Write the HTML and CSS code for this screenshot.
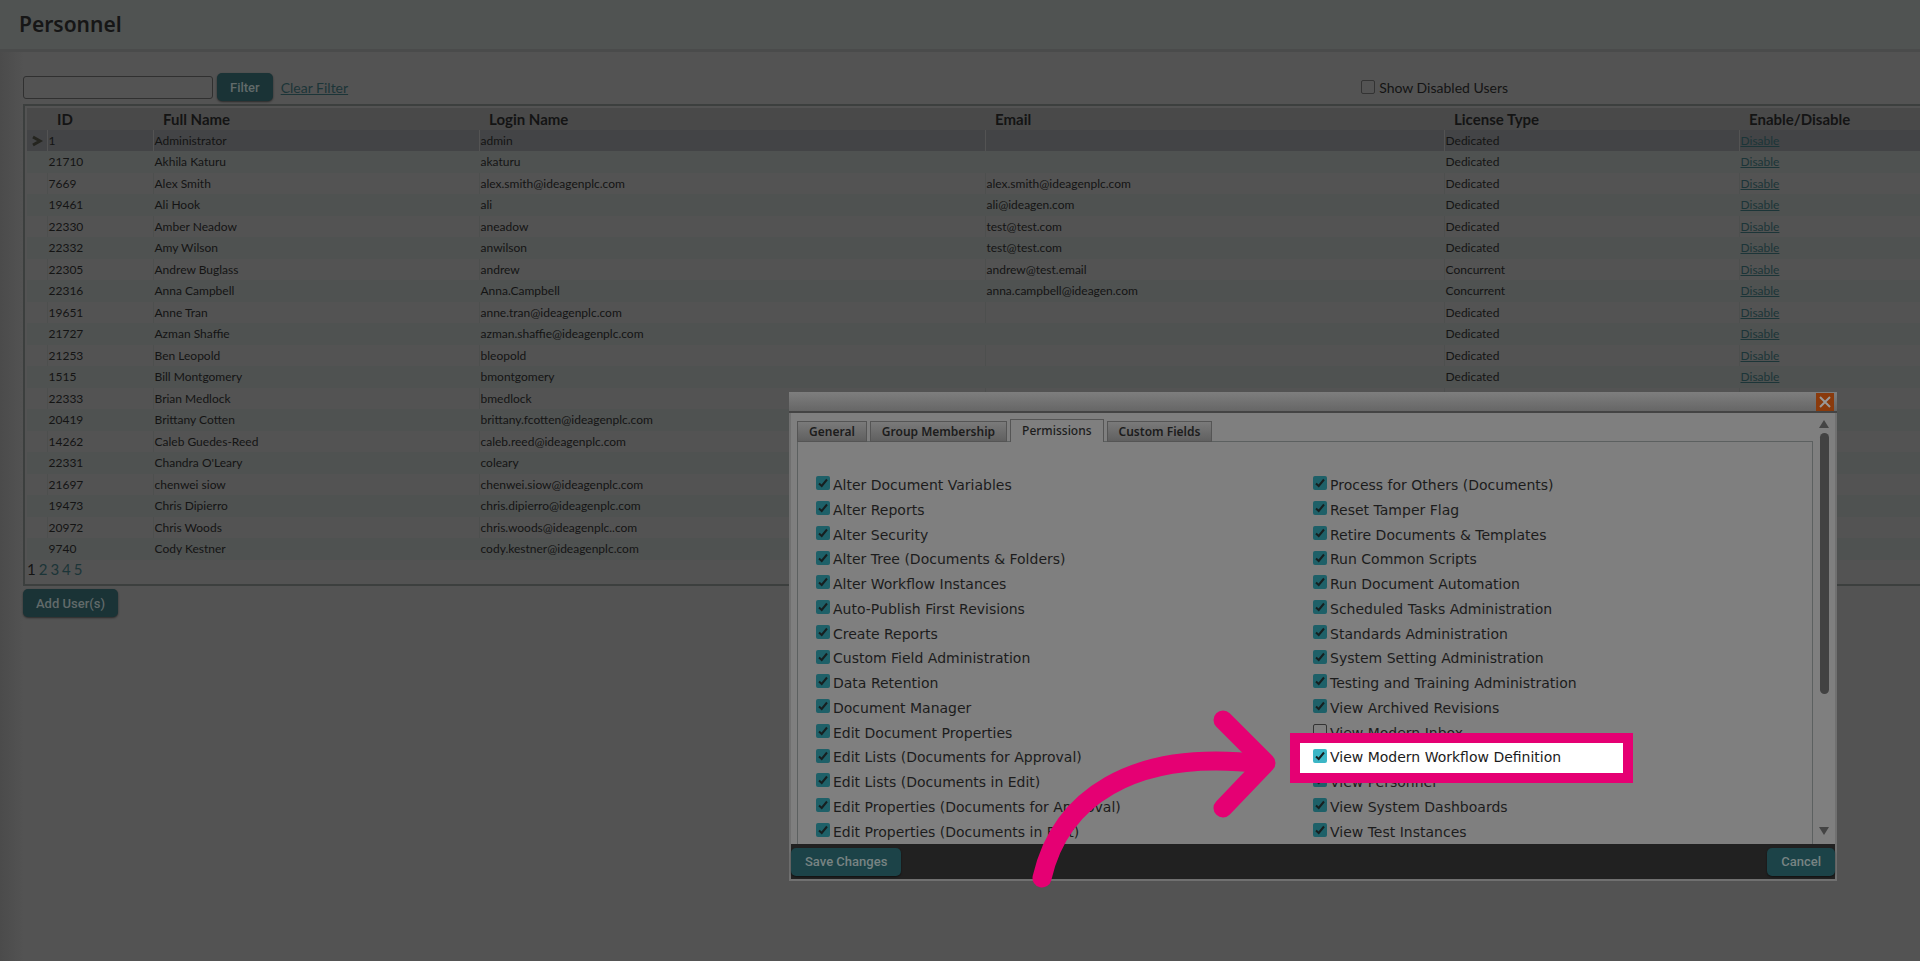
FILE: index.html
```
<!DOCTYPE html>
<html lang="en">

<head>
    <meta charset="UTF-8">
    <meta name="viewport" content="width=device-width, initial-scale=1.0">
    <title>Personnel</title>
    <link rel="stylesheet" href="styles.css">
</head>

<body>

    <header class="page-header">
        <h1>Personnel</h1>
    </header>

    <main class="page">
        <form class="toolbar">
            <input type="text" class="filter-input" aria-label="Filter users">
            <button type="button" class="btn">Filter</button>
            <a href="#" class="clear-link">Clear Filter</a>
            <label class="show-disabled"><input type="checkbox" class="check"> Show Disabled Users</label>
        </form>

        <div class="grid-box">
            <table class="users">
                <colgroup>
                    <col class="col-mark"><col class="col-id"><col class="col-name"><col class="col-login">
                    <col class="col-email"><col class="col-license"><col class="col-action">
                </colgroup>
                <thead>
                    <tr>
                        <th></th>
                        <th>ID</th>
                        <th>Full Name</th>
                        <th>Login Name</th>
                        <th>Email</th>
                        <th>License Type</th>
                        <th>Enable/Disable</th>
                    </tr>
                </thead>
                <tbody id="userRows"></tbody>
            </table>
            <nav class="pager">
                <span>1</span>
                <a href="#">2</a>
                <a href="#">3</a>
                <a href="#">4</a>
                <a href="#">5</a>
            </nav>
        </div>

        <button type="button" class="btn">Add User(s)</button>
    </main>

    <div class="modal" role="dialog" aria-label="User permissions">
        <div class="modal-title">
            <button type="button" class="close" aria-label="Close">
                <svg viewBox="0 0 18 18" width="18" height="18"><path d="M4 4L14 14M14 4L4 14" /></svg>
            </button>
        </div>

        <div class="modal-body">
            <div class="modal-main">
                <div class="tabs">
                    <button type="button" class="tab">General</button>
                    <button type="button" class="tab">Group Membership</button>
                    <button type="button" class="tab active">Permissions</button>
                    <button type="button" class="tab">Custom Fields</button>
                </div>
                <div class="panel">
                    <div class="perm-list" id="permsLeft"></div>
                    <div class="perm-list" id="permsRight"></div>
                </div>
            </div>
            <div class="scrollbar">
                <svg viewBox="0 0 10 8" width="10" height="8"><path d="M5 0L10 8H0Z" /></svg>
                <div class="track"><div class="thumb"></div></div>
                <svg viewBox="0 0 10 8" width="10" height="8"><path d="M0 0H10L5 8Z" /></svg>
            </div>
        </div>

        <div class="modal-footer">
            <button type="button" class="btn">Save Changes</button>
            <button type="button" class="btn">Cancel</button>
        </div>

        <svg class="arrow" viewBox="1030 708 250 182" width="250" height="182">
            <path d="M1042 878C1060 800 1130 748 1262 764" />
            <path d="M1223 720L1266 763L1223 808" />
        </svg>
    </div>

    <script>
        const users = [
            ['1', 'Administrator', 'admin', '', 'Dedicated'],
            ['21710', 'Akhila Katuru', 'akaturu', '', 'Dedicated'],
            ['7669', 'Alex Smith', 'alex.smith@ideagenplc.com', 'alex.smith@ideagenplc.com', 'Dedicated'],
            ['19461', 'Ali Hook', 'ali', 'ali@ideagen.com', 'Dedicated'],
            ['22330', 'Amber Neadow', 'aneadow', 'test@test.com', 'Dedicated'],
            ['22332', 'Amy Wilson', 'anwilson', 'test@test.com', 'Dedicated'],
            ['22305', 'Andrew Buglass', 'andrew', 'andrew@test.email', 'Concurrent'],
            ['22316', 'Anna Campbell', 'Anna.Campbell', 'anna.campbell@ideagen.com', 'Concurrent'],
            ['19651', 'Anne Tran', 'anne.tran@ideagenplc.com', '', 'Dedicated'],
            ['21727', 'Azman Shaffie', 'azman.shaffie@ideagenplc.com', '', 'Dedicated'],
            ['21253', 'Ben Leopold', 'bleopold', '', 'Dedicated'],
            ['1515', 'Bill Montgomery', 'bmontgomery', '', 'Dedicated'],
            ['22333', 'Brian Medlock', 'bmedlock'],
            ['20419', 'Brittany Cotten', 'brittany.fcotten@ideagenplc.com'],
            ['14262', 'Caleb Guedes-Reed', 'caleb.reed@ideagenplc.com'],
            ['22331', "Chandra O'Leary", 'coleary'],
            ['21697', 'chenwei siow', 'chenwei.siow@ideagenplc.com'],
            ['19473', 'Chris Dipierro', 'chris.dipierro@ideagenplc.com'],
            ['20972', 'Chris Woods', 'chris.woods@ideagenplc..com'],
            ['9740', 'Cody Kestner', 'cody.kestner@ideagenplc.com']
        ];

        const permsLeft = [
            'Alter Document Variables', 'Alter Reports', 'Alter Security',
            'Alter Tree (Documents & Folders)', 'Alter Workflow Instances',
            'Auto-Publish First Revisions', 'Create Reports', 'Custom Field Administration',
            'Data Retention', 'Document Manager', 'Edit Document Properties',
            'Edit Lists (Documents for Approval)', 'Edit Lists (Documents in Edit)',
            'Edit Properties (Documents for Approval)', 'Edit Properties (Documents in Edit)'
        ];

        const permsRight = [
            'Process for Others (Documents)', 'Reset Tamper Flag', 'Retire Documents & Templates',
            'Run Common Scripts', 'Run Document Automation', 'Scheduled Tasks Administration',
            'Standards Administration', 'System Setting Administration',
            'Testing and Training Administration', 'View Archived Revisions', 'View Modern Inbox',
            'View Modern Workflow Definition', 'View Personnel', 'View System Dashboards',
            'View Test Instances'
        ];

        document.getElementById('userRows').innerHTML = users.map((user, i) => {
            const [id, name, login, email = '', license = ''] = user;
            const mark = i === 0
                ? '<svg class="mark" viewBox="0 0 12 12" width="12" height="12"><path d="M2 2L9 6L2 10" /></svg>'
                : '';
            const action = license ? '<a href="#">Disable</a>' : '';
            return `<tr class="${i === 0 ? 'selected' : ''}">
                <td>${mark}</td><td>${id}</td><td>${name}</td><td>${login}</td>
                <td>${email}</td><td>${license}</td><td>${action}</td>
            </tr>`;
        }).join('');

        function renderPerms(targetId, names) {
            document.getElementById(targetId).innerHTML = names.map((name) => {
                const checked = name === 'View Modern Inbox' ? '' : 'checked';
                const highlight = name === 'View Modern Workflow Definition' ? 'highlight' : '';
                return `<label class="perm ${highlight}">
                    <input type="checkbox" class="check" ${checked}>
                    <span>${name.replace('&', '&amp;')}</span>
                </label>`;
            }).join('');
        }

        renderPerms('permsLeft', permsLeft);
        renderPerms('permsRight', permsRight);
    </script>

</body>

</html>
```
FILE: styles.css
```
*,
*::before {
    box-sizing: border-box;
}

body {
    margin: 0;
    min-height: 100vh;
    position: relative;
    overflow: hidden;
    font-family: Lato, sans-serif;
    font-size: 12px;
    color: #141414;
    background: linear-gradient(to right, #4b4b4b 0, #535353 24px);
}

.page-header {
    height: 52px;
    padding: 0 19px 2px;
    display: flex;
    align-items: center;
    background-color: #505352;
    border-bottom: 3px solid #4a4b4b;
}

.page-header h1 {
    margin: 0;
    font-family: "Noto Sans", sans-serif;
    font-size: 21px;
    font-weight: 600;
    color: #161616;
}

.page {
    padding: 21px 0 0 23px;
}

.toolbar {
    display: flex;
    align-items: center;
    margin-bottom: 3px;
}

.filter-input {
    width: 190px;
    height: 23px;
    margin-right: 4px;
    background: none;
    border: 1px solid #303030;
    border-radius: 3px;
}

.btn {
    height: 28px;
    padding: 0 13px;
    border: none;
    border-radius: 5px;
    font-family: Roboto, sans-serif;
    font-size: 13px;
    font-weight: 500;
    color: #616a6a;
    background-color: #1a3336;
    box-shadow: 0 1px 2px rgba(0, 0, 0, 0.5);
}

.toolbar .btn {
    min-width: 54px;
}

a {
    color: #1c3538;
}

.clear-link {
    margin-left: 8px;
    font-size: 14px;
}

.show-disabled {
    margin-left: auto;
    margin-right: 412px;
    display: flex;
    align-items: center;
    gap: 4px;
    font-size: 14px;
}

.check {
    appearance: none;
    flex: none;
    width: 14px;
    height: 14px;
    margin: 0;
    border: 1px solid #333;
    border-radius: 2px;
}

.check:checked {
    border: none;
    background: #1e6068 url('data:image/svg+xml,<svg xmlns="http://www.w3.org/2000/svg" viewBox="0 0 14 14"><path d="M3 7.5L5.7 10L11 3.5" fill="none" stroke="%23171f20" stroke-width="2"/></svg>');
}

.grid-box {
    margin-bottom: 3px;
    padding: 2px 0 0 2px;
    border: 2px solid #3c3f3e;
    border-right: none;
}

.users {
    width: 100%;
    table-layout: fixed;
    border-collapse: collapse;
}

.col-mark {
    width: 20px;
}

.col-id {
    width: 106px;
}

.col-name {
    width: 326px;
}

.col-login {
    width: 506px;
}

.col-email {
    width: 459px;
}

.col-license {
    width: 295px;
}

.users th {
    height: 22px;
    padding: 0 10px;
    text-align: left;
    font-size: 15px;
    line-height: 20px;
    background-color: #494949;
}

.users td {
    height: 21px;
    padding: 0 1px;
    line-height: 16px;
    white-space: nowrap;
    border-left: 1px solid #4d4f4e;
}

.users td:first-child {
    border-left: none;
}

.users tbody tr:nth-child(even) td {
    height: 22px;
    border-color: #4f5251;
    background-color: #4f5251;
}

.users .selected td {
    background-color: #434446;
    border-color: #535353;
}

.mark {
    display: block;
    margin: auto;
    fill: none;
    stroke: #25251f;
    stroke-width: 3;
}

.pager {
    display: flex;
    gap: 3px;
    height: 24px;
    font-size: 15px;
}

.pager a {
    text-decoration: none;
}

.modal {
    position: absolute;
    top: 392px;
    left: 789px;
    right: 83px;
    border: 2px solid #707070;
    border-top: none;
    font-family: "DejaVu Sans", sans-serif;
    color: #1c1c1c;
    background-color: #7f7f7f;
}

.modal-title {
    height: 21px;
    margin: 0 -2px;
    padding: 1px 3px 0;
    display: flex;
    justify-content: flex-end;
    background: linear-gradient(#7e7e7e, #666);
    border-bottom: 2px solid #444;
}

.close {
    width: 18px;
    height: 18px;
    padding: 0;
    border: none;
    background-color: #8a3a0c;
}

.close svg {
    display: block;
    fill: none;
    stroke: #999;
    stroke-width: 2;
}

.modal-body {
    display: flex;
}

.modal-main {
    flex: 1;
    padding: 6px 0 0 6px;
}

.tabs {
    display: flex;
    align-items: flex-end;
    gap: 3px;
    margin-bottom: -1px;
}

.tab {
    height: 21px;
    padding: 0 11px;
    border: 1px solid #555;
    font-family: "Noto Sans", sans-serif;
    font-size: 12px;
    font-weight: 600;
    line-height: 18px;
    color: #1c1c1c;
    background: linear-gradient(#7a7a7a, #606060);
}

.tab.active {
    height: 23px;
    border-bottom: none;
    font-weight: 500;
    background: #7f7f7f;
}

.panel {
    display: grid;
    grid-template-columns: 497px 1fr;
    padding: 30px 18px 0;
    border: 1px solid #5c6060;
    border-bottom: none;
}

.perm-list {
    display: flex;
    flex-direction: column;
}

.perm {
    position: relative;
    height: 25px;
    display: flex;
    align-items: center;
    gap: 3px;
    font-size: 14px;
    line-height: 16px;
}

.perm:nth-child(4n) {
    height: 24px;
}

.perm .check {
    margin-bottom: 3px;
}

.highlight {
    z-index: 1;
}

.highlight::before {
    content: "";
    position: absolute;
    z-index: -1;
    top: -12px;
    left: -23px;
    width: 343px;
    height: 50px;
    border: 10px solid #e50073;
    background-color: #fff;
}

.highlight .check:checked {
    background-color: #3cb6c6;
}

.scrollbar {
    width: 22px;
    padding: 7px 0 9px;
    display: flex;
    flex-direction: column;
    align-items: center;
    fill: #444;
}

.track {
    flex: 1;
    padding: 5px 0;
}

.thumb {
    width: 9px;
    height: 67%;
    border-radius: 5px;
    background-color: #424242;
}

.modal-footer {
    height: 35px;
    display: flex;
    align-items: center;
    justify-content: space-between;
    background-color: #212121;
}

.modal-footer .btn {
    padding: 0 14px;
    color: #788383;
    background-color: #1c4348;
}

.arrow {
    position: absolute;
    z-index: 2;
    top: 316px;
    left: 239px;
    fill: none;
    stroke: #e50073;
    stroke-width: 19;
    stroke-linecap: round;
    stroke-linejoin: round;
}
```
